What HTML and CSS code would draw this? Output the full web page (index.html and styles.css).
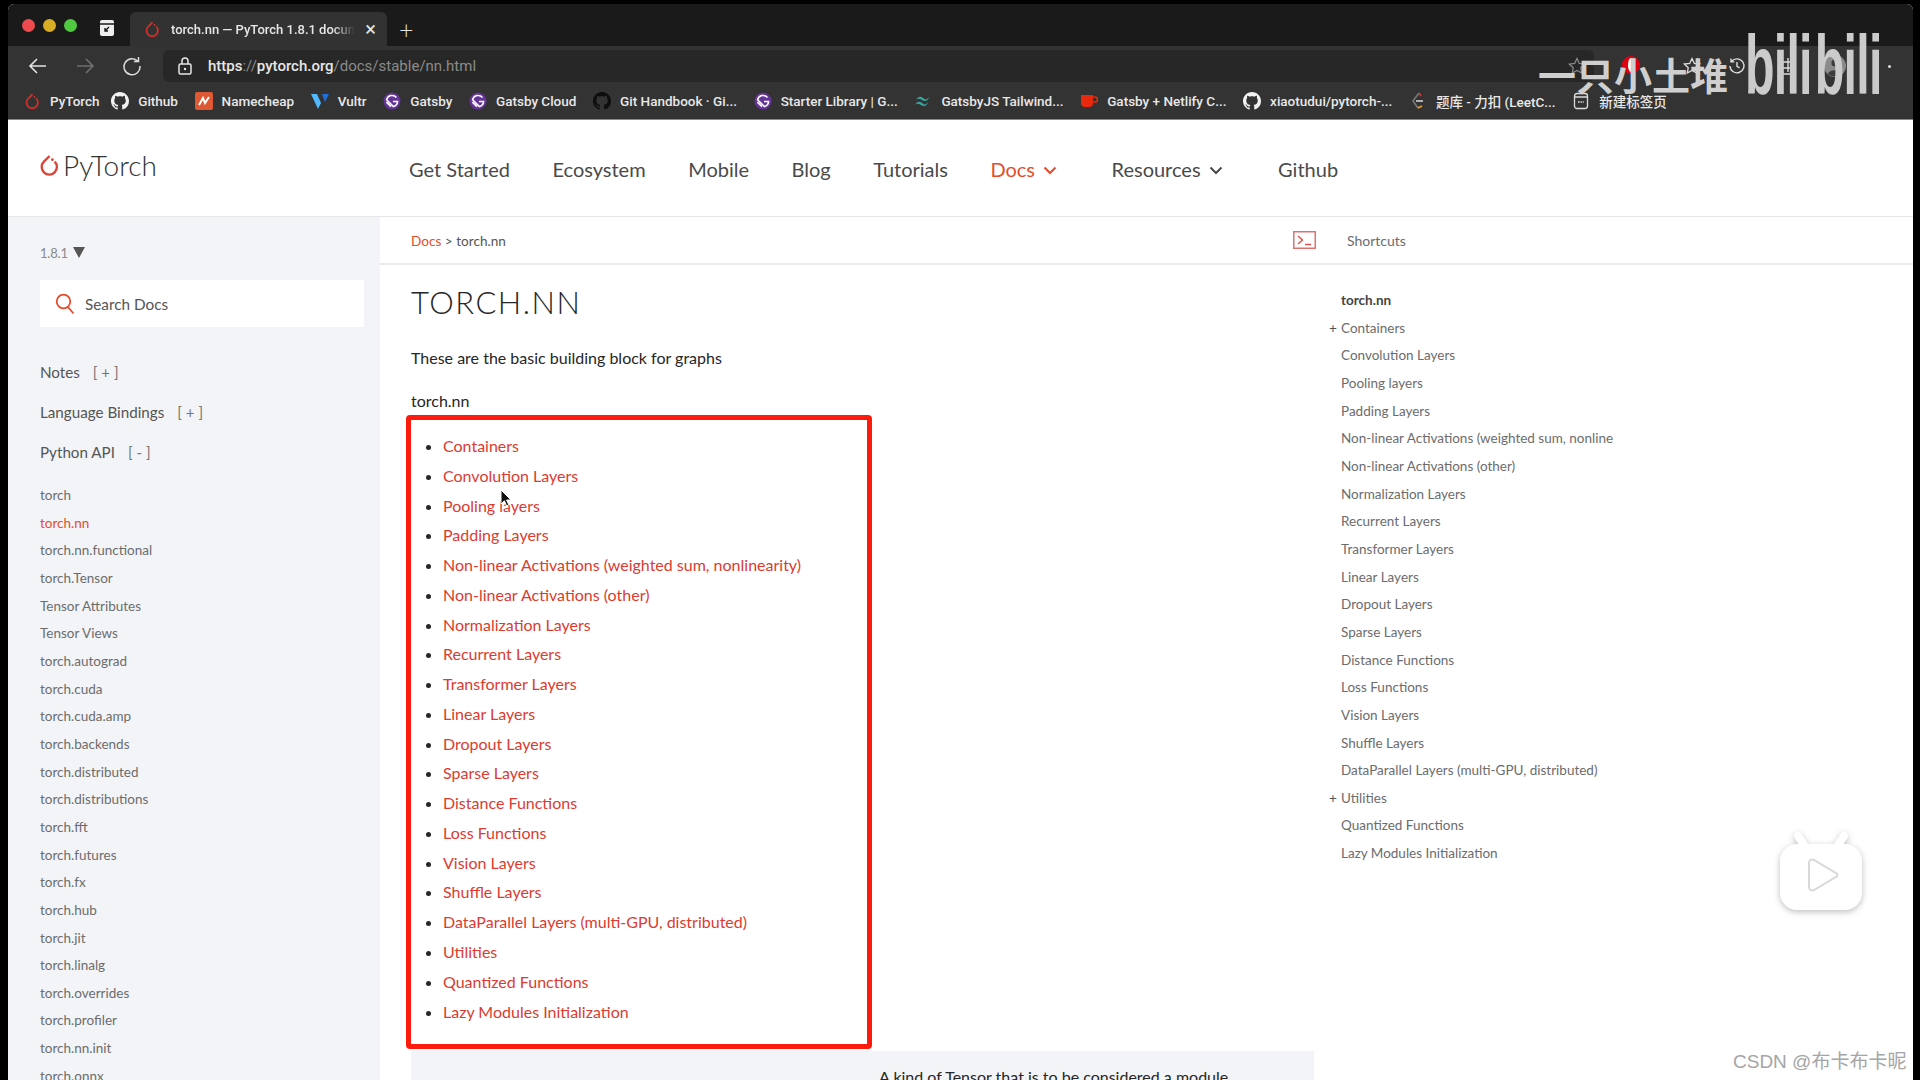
FILE: index.html
```html
<!DOCTYPE html>
<html lang="en">
<head>
    <meta charset="UTF-8">
    <title>torch.nn — PyTorch 1.8.1 documentation</title>
    <link rel="stylesheet" href="styles.css">
</head>
<body>
<svg class="defs" width="0" height="0">
    <symbol id="flame" viewBox="0 0 24 24">
        <path d="M12.6 3 6.9 8.7a7.6 7.6 0 1 0 10.8 0" fill="none" stroke="currentColor" stroke-width="2.4"/>
        <circle cx="15.4" cy="6.7" r="1.4" fill="currentColor"/>
    </symbol>
    <symbol id="octo" viewBox="0 0 16 16">
        <path fill="currentColor" d="M8 0C3.58 0 0 3.58 0 8c0 3.54 2.29 6.53 5.47 7.59.4.07.55-.17.55-.38 0-.19-.01-.82-.01-1.49-2.01.37-2.53-.49-2.69-.94-.09-.23-.48-.94-.82-1.13-.28-.15-.68-.52-.01-.53.63-.01 1.08.58 1.23.82.72 1.21 1.87.87 2.33.66.07-.52.28-.87.51-1.07-1.78-.2-3.64-.89-3.64-3.95 0-.87.31-1.59.82-2.15-.08-.2-.36-1.02.08-2.12 0 0 .67-.21 2.2.82.64-.18 1.32-.27 2-.27.68 0 1.36.09 2 .27 1.53-1.04 2.2-.82 2.2-.82.44 1.1.16 1.92.08 2.12.51.56.82 1.27.82 2.15 0 3.07-1.87 3.75-3.65 3.95.29.25.54.73.54 1.48 0 1.07-.01 1.93-.01 2.2 0 .21.15.46.55.38A8.013 8.013 0 0016 8c0-4.42-3.58-8-8-8z"/>
    </symbol>
    <symbol id="gatsby" viewBox="0 0 20 20">
        <circle cx="10" cy="10" r="9.5" fill="#663399"/>
        <path d="M15 6.2A6.3 6.3 0 0 0 4 8.6l7.6 7.6A6.3 6.3 0 0 0 16.2 10.6H11" fill="none" stroke="#fff" stroke-width="1.7"/>
        <path d="M3.8 11.2 8.9 16.2" fill="none" stroke="#fff" stroke-width="1.7"/>
    </symbol>
    <symbol id="chev" viewBox="0 0 14 9">
        <path d="M1.5 1.5 7 7l5.5-5.5" fill="none" stroke="currentColor" stroke-width="2"/>
    </symbol>
</svg>

<div class="screen">
    <div class="tabstrip">
        <div class="lights"><i class="red"></i><i class="amber"></i><i class="green"></i></div>
        <svg class="tab-side" width="16" height="18" viewBox="0 0 16 18">
            <rect x="1" y="1" width="14" height="16" rx="2" fill="#eee"/>
            <path d="M1 5h14" stroke="#1a1a1a" stroke-width="1.4"/>
            <path d="M10 8 6 12m0-3v3h3" fill="none" stroke="#1a1a1a" stroke-width="1.4"/>
        </svg>
        <div class="tab">
            <svg class="ico flame"><use href="#flame"/></svg>
            <span class="tab-title">torch.nn — PyTorch 1.8.1 documentation</span>
            <span class="tab-close">×</span>
        </div>
        <span class="tab-new">+</span>
    </div>

    <div class="toolbar">
        <svg class="nav-btn" width="20" height="18" viewBox="0 0 20 18"><path d="M18 9H2m7-7L2 9l7 7" fill="none" stroke="#e4e4e4" stroke-width="1.6"/></svg>
        <svg class="nav-btn" width="20" height="18" viewBox="0 0 20 18"><path d="M2 9h16m-7-7 7 7-7 7" fill="none" stroke="#6f6f6f" stroke-width="1.6"/></svg>
        <svg class="nav-btn" width="20" height="20" viewBox="0 0 20 20"><path d="M15.8 5.2A8 8 0 1 0 18 10M16.5 1v4.6h-4.6" fill="none" stroke="#dcdcdc" stroke-width="1.5"/></svg>
        <div class="url">
            <svg width="14" height="18" viewBox="0 0 14 18"><rect x="1" y="7" width="12" height="10" rx="1.5" fill="none" stroke="#e6e6e6" stroke-width="1.5"/><path d="M4 7V4a3 3 0 0 1 6 0v3" fill="none" stroke="#e6e6e6" stroke-width="1.5"/><circle cx="7" cy="12" r="1.2" fill="#e6e6e6"/></svg>
            <span class="url-text">https<span class="dim">://</span>pytorch.org<span class="dim">/docs/stable/nn.html</span></span>
            <svg class="url-star" width="20" height="20" viewBox="0 0 24 24"><path d="m12 3 2.8 5.9 6.4.8-4.7 4.4 1.2 6.4L12 17.4l-5.7 3.1 1.2-6.4-4.7-4.4 6.4-.8z" fill="none" stroke="#8a8a8a" stroke-width="1.5"/></svg>
        </div>
        <div class="tool-icons">
            <span class="rec"></span>
            <svg class="star" width="20" height="20" viewBox="0 0 24 24"><path d="m12 3 2.8 5.9 6.4.8-4.7 4.4 1.2 6.4L12 17.4l-5.7 3.1 1.2-6.4-4.7-4.4 6.4-.8z" fill="none" stroke="#ddd" stroke-width="1.6"/></svg>
            <svg class="hist" width="18" height="18" viewBox="0 0 18 18"><path d="M3.5 4.5A7 7 0 1 1 2 9M3 1.5v3.4h3.4M9 5v4.4l2.6 1.4" fill="none" stroke="#ddd" stroke-width="1.4"/></svg>
            <svg class="ext" width="14" height="20" viewBox="0 0 14 20"><rect x="1.5" y="6" width="11" height="12" rx="2" fill="none" stroke="#ddd" stroke-width="1.4"/><path d="M7 2v14M1.5 12h11" stroke="#ddd" stroke-width="1.4"/></svg>
            <svg class="user" width="22" height="22" viewBox="0 0 22 22"><circle cx="11" cy="11" r="11" fill="#8b8b8b"/><circle cx="11" cy="8" r="3.6" fill="#3c3c3c"/><path d="M4 19c1-5 13-5 14 0a11 11 0 0 1-14 0z" fill="#3c3c3c"/></svg>
            <span class="dots"></span>
        </div>
    </div>

    <div class="bookmarks">
        <a class="bm"><svg class="ico flame"><use href="#flame"/></svg>PyTorch</a>
        <a class="bm"><svg class="ico octo-w"><use href="#octo"/></svg>Github</a>
        <a class="bm"><svg class="ico" viewBox="0 0 18 18"><rect width="18" height="18" rx="2" fill="#de5833"/><path d="M4 13 8 6l2 5 4-6" fill="none" stroke="#fff" stroke-width="2"/></svg>Namecheap</a>
        <a class="bm"><svg class="ico" viewBox="0 0 18 18"><path d="M0 2h6l4 9-3 6z" fill="#51b9ff"/><path d="M11 2h7l-4 8z" fill="#1f6fde"/></svg>Vultr</a>
        <a class="bm"><svg class="ico"><use href="#gatsby"/></svg>Gatsby</a>
        <a class="bm"><svg class="ico"><use href="#gatsby"/></svg>Gatsby Cloud</a>
        <a class="bm"><svg class="ico octo-k"><use href="#octo"/></svg>Git Handbook · Gi...</a>
        <a class="bm"><svg class="ico"><use href="#gatsby"/></svg>Starter Library | G...</a>
        <a class="bm"><svg class="ico" viewBox="0 0 18 18"><path d="M2 8c2-4 5-4 7-2s4 2 6-1c-1 4-4 5-7 3-2-1-4-2-6 0zM1 13c2-4 5-4 7-2s4 2 6-1c-1 4-4 5-7 3-2-1-4-2-6 0z" fill="#38a6a0"/></svg>GatsbyJS Tailwind...</a>
        <a class="bm"><svg class="ico" viewBox="0 0 18 18"><path d="M1 3h12v8a4 4 0 0 1-4 4H5a4 4 0 0 1-4-4z" fill="#e8290e"/><path d="M13 5h2a2 2 0 0 1 0 5h-2" fill="none" stroke="#e8290e" stroke-width="1.6"/></svg>Gatsby + Netlify C...</a>
        <a class="bm"><svg class="ico octo-w"><use href="#octo"/></svg>xiaotudui/pytorch-...</a>
        <a class="bm"><svg class="ico" viewBox="0 0 18 18"><path d="M10 1 4 9l5 7" fill="none" stroke="#777" stroke-width="1.6"/><path d="M7 9h7" stroke="#ddd" stroke-width="1.6"/><path d="M9 16l4-2" stroke="#f0a020" stroke-width="1.6"/><path d="M10 1l2 3" stroke="#d33" stroke-width="1.6"/></svg>题库 - 力扣 (LeetC...</a>
        <a class="bm"><svg class="ico" viewBox="0 0 18 18"><rect x="2.5" y="1.5" width="13" height="15" rx="2.5" fill="none" stroke="#ddd" stroke-width="1.3"/><path d="M2.5 5h13" stroke="#ddd" stroke-width="1.3"/><path d="M6 10h6" stroke="#ddd" stroke-width="1.6" stroke-dasharray="1.6 1"/></svg>新建标签页</a>
    </div>

    <div class="page">
        <header class="site-head">
            <div class="logo"><svg class="logo-mark"><use href="#flame"/></svg>PyTorch</div>
            <nav class="main-nav">
                <a>Get Started</a>
                <a>Ecosystem</a>
                <a>Mobile</a>
                <a>Blog</a>
                <a>Tutorials</a>
                <a class="on">Docs<svg class="chev"><use href="#chev"/></svg></a>
                <a class="wide">Resources<svg class="chev"><use href="#chev"/></svg></a>
                <a>Github</a>
            </nav>
        </header>

        <div class="docs">
            <aside class="side">
                <div class="version">1.8.1 <span class="tri"></span></div>
                <div class="search">
                    <svg width="20" height="22" viewBox="0 0 20 22"><circle cx="8.5" cy="8.5" r="6.8" fill="none" stroke="#e44c2c" stroke-width="1.8"/><path d="m13 14 5.5 6.5" stroke="#e44c2c" stroke-width="1.8"/></svg>
                    <span>Search Docs</span>
                </div>
                <div class="side-heads">
                    <div>Notes <b>[ + ]</b></div>
                    <div>Language Bindings <b>[ + ]</b></div>
                    <div>Python API <b>[ - ]</b></div>
                </div>
                <ul class="side-list">
                    <li>torch</li>
                    <li class="on">torch.nn</li>
                    <li>torch.nn.functional</li>
                    <li>torch.Tensor</li>
                    <li>Tensor Attributes</li>
                    <li>Tensor Views</li>
                    <li>torch.autograd</li>
                    <li>torch.cuda</li>
                    <li>torch.cuda.amp</li>
                    <li>torch.backends</li>
                    <li>torch.distributed</li>
                    <li>torch.distributions</li>
                    <li>torch.fft</li>
                    <li>torch.futures</li>
                    <li>torch.fx</li>
                    <li>torch.hub</li>
                    <li>torch.jit</li>
                    <li>torch.linalg</li>
                    <li>torch.overrides</li>
                    <li>torch.profiler</li>
                    <li>torch.nn.init</li>
                    <li>torch.onnx</li>
                </ul>
            </aside>

            <div class="main">
                <div class="crumbs">
                    <div class="crumb-left"><a>Docs</a> &gt; torch.nn</div>
                    <div class="crumb-right">
                        <svg width="23" height="18" viewBox="0 0 23 18"><rect x=".75" y=".75" width="21.5" height="16.5" fill="none" stroke="#e0716c" stroke-width="1.5"/><path d="m5 5 4.5 4L5 13" fill="none" stroke="#e0504a" stroke-width="1.4"/><path d="M12 13.5h6" stroke="#e0504a" stroke-width="1.4"/></svg>
                        <span>Shortcuts</span>
                    </div>
                </div>
                <div class="cols">
                    <article class="article">
                        <h1>TORCH.NN</h1>
                        <p class="lead">These are the basic building block for graphs</p>
                        <p class="sub">torch.nn</p>
                        <div class="redbox">
                            <ul class="links">
                                <li><a>Containers</a></li>
                                <li><a>Convolution Layers</a></li>
                                <li><a>Pooling layers</a></li>
                                <li><a>Padding Layers</a></li>
                                <li><a>Non-linear Activations (weighted sum, nonlinearity)</a></li>
                                <li><a>Non-linear Activations (other)</a></li>
                                <li><a>Normalization Layers</a></li>
                                <li><a>Recurrent Layers</a></li>
                                <li><a>Transformer Layers</a></li>
                                <li><a>Linear Layers</a></li>
                                <li><a>Dropout Layers</a></li>
                                <li><a>Sparse Layers</a></li>
                                <li><a>Distance Functions</a></li>
                                <li><a>Loss Functions</a></li>
                                <li><a>Vision Layers</a></li>
                                <li><a>Shuffle Layers</a></li>
                                <li><a>DataParallel Layers (multi-GPU, distributed)</a></li>
                                <li><a>Utilities</a></li>
                                <li><a>Quantized Functions</a></li>
                                <li><a>Lazy Modules Initialization</a></li>
                            </ul>
                            <svg class="cursor" width="12" height="18" viewBox="0 0 12 18"><path d="M1 1v14l3.4-3.2 2.2 5 2.2-1-2.2-4.8H11z" fill="#111" stroke="#fff" stroke-width="1"/></svg>
                        </div>
                        <div class="table-row">A kind of Tensor that is to be considered a module</div>
                    </article>
                    <aside class="toc">
                        <div class="toc-title">torch.nn</div>
                        <div class="plus">Containers</div>
                        <div>Convolution Layers</div>
                        <div>Pooling layers</div>
                        <div>Padding Layers</div>
                        <div>Non-linear Activations (weighted sum, nonline</div>
                        <div>Non-linear Activations (other)</div>
                        <div>Normalization Layers</div>
                        <div>Recurrent Layers</div>
                        <div>Transformer Layers</div>
                        <div>Linear Layers</div>
                        <div>Dropout Layers</div>
                        <div>Sparse Layers</div>
                        <div>Distance Functions</div>
                        <div>Loss Functions</div>
                        <div>Vision Layers</div>
                        <div>Shuffle Layers</div>
                        <div>DataParallel Layers (multi-GPU, distributed)</div>
                        <div class="plus">Utilities</div>
                        <div>Quantized Functions</div>
                        <div>Lazy Modules Initialization</div>
                    </aside>
                </div>
            </div>
        </div>
    </div>
</div>

<!-- video watermarks -->
<div class="wm-name">一只小土堆</div>
<div class="wm-bili"><span>bili</span><span>bili</span></div>
<svg class="wm-tv" width="90" height="84" viewBox="0 0 90 84">
    <path d="M28 14 22 5M62 14l6-9" stroke="#fff" stroke-width="8" stroke-linecap="round"/>
    <rect x="4" y="13" width="82" height="66" rx="17" fill="#fff"/>
    <path d="M33 32c0-3 2-4 5-3l22 13c2 1 2 3 0 4L38 59c-3 1-5 0-5-3z" fill="#fff" stroke="#d9d9d9" stroke-width="2"/>
</svg>
<div class="wm-csdn">CSDN @布卡布卡昵</div>
</body>
</html>
```

FILE: styles.css
```css
* {
    box-sizing: border-box;
}

html, body {
    margin: 0;
    height: 1080px;
    overflow: hidden;
}

body {
    background-color: #000;
    font-family: Lato, "Noto Sans CJK SC", sans-serif;
    position: relative;
}

.defs {
    position: absolute;
}

.screen {
    margin: 4px 7px 0 8px;
    height: 1076px;
    display: flex;
    flex-direction: column;
    overflow: hidden;
    border-radius: 6px 6px 0 0;
    background-color: #fff;
}

/* browser chrome */
.tabstrip {
    height: 42px;
    flex: none;
    background-color: #1a1a1a;
    display: flex;
    align-items: flex-end;
    color: #e6e6e6;
}

.lights {
    display: flex;
    gap: 8px;
    align-self: center;
    margin: 0 0 0 14px;
}

.lights i {
    width: 13px;
    height: 13px;
    border-radius: 50%;
}

.lights .red { background-color: #f04a4f; }
.lights .amber { background-color: #d9ad25; }
.lights .green { background-color: #50c840; }

.tab-side {
    align-self: center;
    margin: 6px 0 0 22px;
}

.tab {
    width: 257px;
    height: 34px;
    margin-left: 15px;
    padding: 0 11px 0 13px;
    background-color: #323232;
    border-radius: 6px 6px 0 0;
    display: flex;
    align-items: center;
    gap: 10px;
    font-family: Roboto, sans-serif;
    font-size: 13px;
    font-weight: 500;
}

.tab-title {
    flex: 1;
    overflow: hidden;
    white-space: nowrap;
    -webkit-mask-image: linear-gradient(to right, #000 88%, transparent);
    mask-image: linear-gradient(to right, #000 88%, transparent);
}

.tab-close {
    font-size: 20px;
    font-weight: 400;
    line-height: 1;
}

.tab-new {
    font-size: 25px;
    font-weight: 300;
    line-height: 34px;
    margin-left: 12px;
}

.toolbar {
    height: 36px;
    flex: none;
    background-color: #333;
    display: flex;
    align-items: center;
    padding: 4px 0 0 20px;
}

.nav-btn {
    margin-right: 27px;
}

.nav-btn:nth-child(3) {
    margin-right: 17px;
}

.url {
    width: 1431px;
    height: 32px;
    margin-left: 4px;
    padding: 0 15px;
    background-color: #272727;
    border-radius: 6px;
    display: flex;
    align-items: center;
    gap: 16px;
    font-family: Roboto, sans-serif;
    font-size: 15px;
    font-weight: 500;
    color: #e6e6e6;
    position: relative;
}

.url-text {
    flex: 1;
}

.url .dim {
    color: #8b8b8b;
    font-weight: 400;
}

.url-star {
    margin-right: -8px;
}

.tool-icons {
    flex: 1;
    display: flex;
    align-items: center;
    position: relative;
    height: 32px;
}

.tool-icons .rec {
    position: absolute;
    left: 28px;
    top: 6px;
    width: 18px;
    height: 18px;
    border-radius: 50%;
    background-color: #e00010;
}

.tool-icons .rec::after {
    content: "";
    position: absolute;
    left: 6px;
    top: 2px;
    width: 6px;
    height: 14px;
    border-radius: 50%;
    background-color: #fff;
}

.tool-icons .star {
    margin-left: 88px;
}

.tool-icons .hist {
    margin-left: 26px;
}

.tool-icons .ext {
    margin-left: 35px;
}

.tool-icons .user {
    margin-left: 29px;
}

.tool-icons .dots {
    width: 3px;
    height: 3px;
    margin-left: 42px;
    border-radius: 50%;
    background-color: #ddd;
}

.bookmarks {
    height: 38px;
    flex: none;
    background-color: #333;
    border-bottom: 1px solid #8a8a8a;
    display: flex;
    align-items: center;
    gap: 16.7px;
    padding: 0 0 0 15px;
    color: #e8e8e8;
    font-family: Roboto, "Noto Sans CJK SC", sans-serif;
    font-size: 13.5px;
    font-weight: 500;
}

.bm {
    display: flex;
    align-items: center;
    gap: 9px;
    white-space: nowrap;
}

.bm:first-child {
    margin-right: -5px;
}

.ico {
    width: 18px;
    height: 18px;
    flex: none;
}

.flame {
    color: #cf2f2a;
}

.octo-w {
    color: #f2f2f2;
}

.octo-k {
    color: #0d0d0d;
}

/* site header */
.page {
    flex: 1;
    min-height: 0;
    display: flex;
    flex-direction: column;
    color: #262626;
}

.site-head {
    height: 97px;
    flex: none;
    border-bottom: 1px solid #e6e6e6;
    display: flex;
    align-items: center;
}

.logo {
    width: 401px;
    padding: 0 0 7px 29px;
    display: flex;
    align-items: center;
    gap: 2px;
    font-size: 28px;
    font-weight: 300;
    color: #333;
}

.logo-mark {
    width: 24px;
    height: 26px;
    color: #d8463a;
}

.main-nav {
    display: flex;
    gap: 42.5px;
    padding-top: 1px;
    font-size: 20px;
    color: #4a4a4a;
}

.main-nav a {
    display: flex;
    align-items: center;
    gap: 8px;
}

.main-nav .on {
    color: #e44c2c;
    margin-right: 12px;
}

.main-nav .wide {
    margin-right: 13px;
}

.chev {
    width: 14px;
    height: 9px;
    margin-top: 3px;
}

/* docs layout */
.docs {
    flex: 1;
    min-height: 0;
    display: flex;
}

.side {
    width: 372px;
    flex: none;
    background-color: #f3f4f7;
    padding: 27px 16px 0 32px;
    color: #6c6c6d;
}

.version {
    font-size: 13px;
    line-height: 18px;
    letter-spacing: -0.2px;
    color: #8a8a8a;
}

.tri {
    display: inline-block;
    width: 0;
    height: 0;
    margin-left: 2px;
    border-left: 6px solid transparent;
    border-right: 6px solid transparent;
    border-top: 11px solid #555;
}

.search {
    height: 47px;
    margin-top: 18px;
    padding-left: 15px;
    background-color: #fff;
    display: flex;
    align-items: center;
    gap: 10px;
    font-size: 15.3px;
    color: #555;
}

.side-heads {
    margin-top: 25px;
    font-size: 15.2px;
    color: #555;
}

.side-heads div {
    height: 40px;
    line-height: 40px;
}

.side-heads b {
    font-weight: 400;
    margin-left: 9px;
    color: #777;
}

.side-list {
    list-style: none;
    margin: 10px 0 0;
    padding: 0;
    font-size: 13.5px;
}

.side-list li {
    height: 27.67px;
    line-height: 27.67px;
}

.side-list .on {
    color: #e44c2c;
}

.main {
    flex: 1;
    min-width: 0;
    display: flex;
    flex-direction: column;
}

.crumbs {
    height: 48px;
    flex: none;
    border-bottom: 2px solid #eaeaea;
    display: flex;
    align-items: center;
    padding-left: 31px;
    font-size: 14px;
    color: #555;
}

.crumb-left {
    width: 882px;
    padding-top: 1px;
    font-size: 13.6px;
}

.crumb-left a {
    color: #e44c2c;
}

.crumb-right {
    display: flex;
    align-items: center;
    gap: 31px;
    color: #6c6c6d;
}

.cols {
    flex: 1;
    min-height: 0;
    display: flex;
}

.article {
    width: 961px;
    padding: 0 27px 0 31px;
    flex: none;
}

h1 {
    margin: 17px 0 0;
    font-size: 31px;
    line-height: 40px;
    font-weight: 300;
    letter-spacing: 1.5px;
    color: #262626;
}

.lead, .sub {
    margin: 0;
    font-size: 16px;
    line-height: 24px;
}

.lead {
    margin-top: 24px;
}

.sub {
    margin-top: 19px;
}

.redbox {
    position: relative;
    width: 466px;
    height: 634px;
    margin: 2px 0 0 -5px;
    border: 5px solid #ff1a0e;
    border-radius: 4px;
}

.links {
    margin: 0;
    padding: 11px 0 0 32px;
    font-size: 16px;
    line-height: 29.77px;
}

.links a {
    color: #dc3b30;
}

.cursor {
    position: absolute;
    left: 89px;
    top: 69px;
}

.table-row {
    height: 40px;
    margin-top: 2px;
    padding: 17px 0 0 468px;
    background-color: #f3f4f7;
    font-size: 16px;
    line-height: 18px;
    white-space: nowrap;
}

.toc {
    padding-top: 22px;
    font-size: 13.5px;
    color: #6c6c6d;
}

.toc div {
    height: 27.67px;
    line-height: 27.67px;
    position: relative;
    white-space: nowrap;
}

.toc .toc-title {
    font-weight: 700;
    color: #444;
}

.toc .plus::before {
    content: "+";
    position: absolute;
    left: -12px;
    color: #555;
}

/* watermarks over the video */
.wm-name {
    position: absolute;
    left: 1538px;
    top: 49px;
    font-family: "Noto Sans CJK SC", sans-serif;
    font-size: 38px;
    font-weight: 700;
    line-height: 50px;
    color: #cfcfcf;
}

.wm-bili {
    position: absolute;
    left: 1745px;
    top: 28px;
    display: flex;
    gap: 4px;
    font-family: "Liberation Sans", sans-serif;
    font-size: 62px;
    font-weight: 700;
    line-height: 76px;
    letter-spacing: -1px;
    color: #cbcbcb;
    transform: scale(0.78, 1.35);
    transform-origin: left center;
}

.wm-tv {
    position: absolute;
    left: 1776px;
    top: 831px;
    filter: drop-shadow(0 2px 3px rgba(0, 0, 0, 0.25));
}

.wm-csdn {
    position: absolute;
    left: 1733px;
    top: 1049px;
    font-family: "Liberation Sans", "Noto Sans CJK SC", sans-serif;
    font-size: 19px;
    line-height: 26px;
    color: #a5a5a5;
}
```
